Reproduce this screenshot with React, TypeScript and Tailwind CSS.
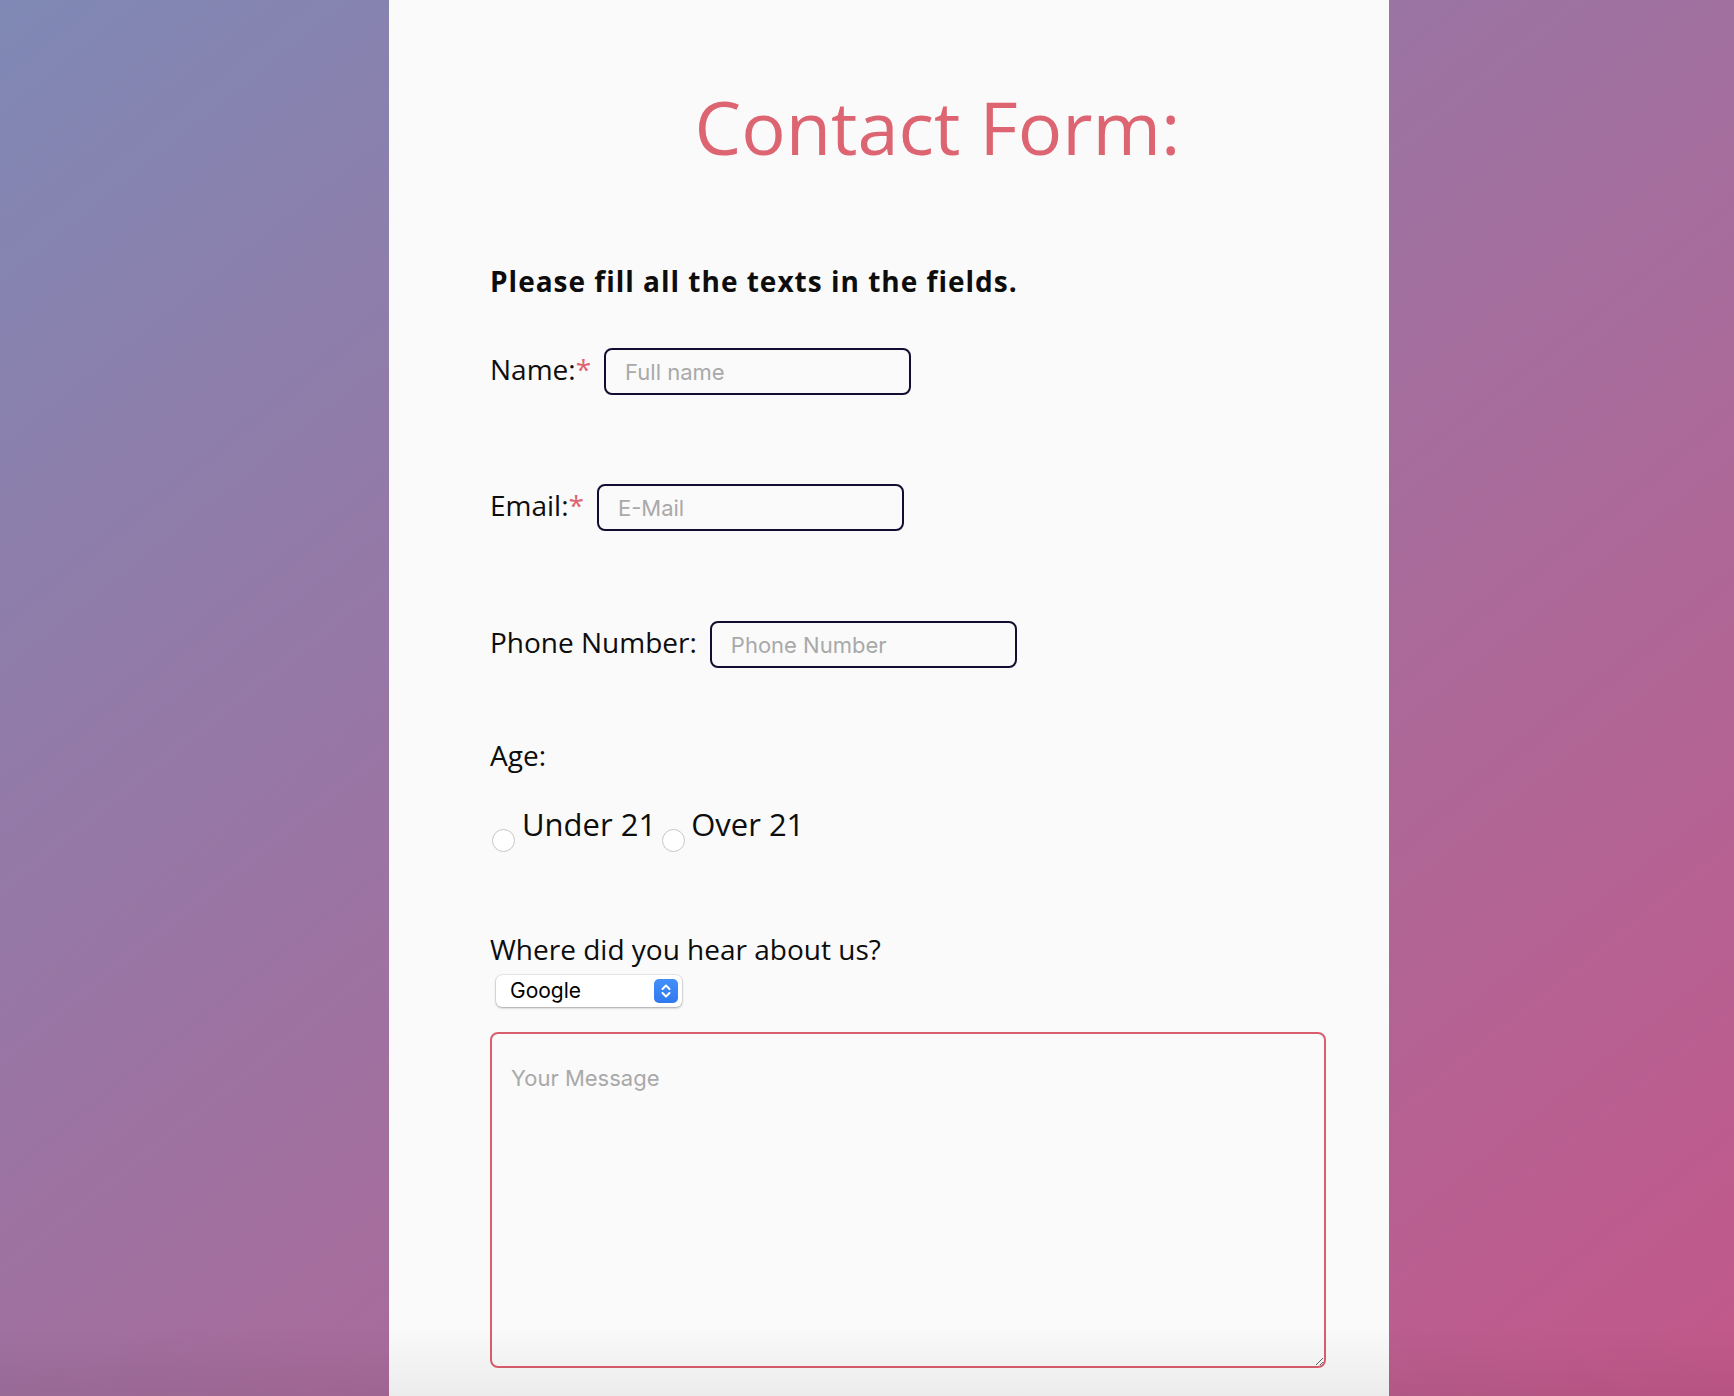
import { useState } from 'react';

function Label({ text, required }: { text: string; required?: boolean }) {
  return (
    <span className="text-[28px] leading-none text-[#0d0d0d]">
      {text}
      {required && <span className="text-[#dd6471]">*</span>}
    </span>
  );
}

function Field({ label, placeholder, required, type = 'text' }: { label: string; placeholder: string; required?: boolean; type?: string }) {
  return (
    <div className="flex items-baseline">
      <Label text={label} required={required} />
      <input
        type={type}
        placeholder={placeholder}
        className="ml-[13px] w-[307px] h-[47px] border-2 border-[#120d33] rounded-[8px] bg-transparent px-[19px] text-[22px] font-['Inter',sans-serif] text-[#111111] placeholder:text-[#a9a9a9] outline-none"
      />
    </div>
  );
}

export default function App() {
  const [age, setAge] = useState('');

  return (
    <div className="relative h-screen w-full overflow-hidden bg-[linear-gradient(to_bottom_right,#7f88b4,#c3588a)] font-['Open_Sans',sans-serif]">
      <div className="ml-[389px] w-[1000px] h-full bg-[#fafafa] pl-[101px] pr-[4px] pt-[90px]">
        {/* Title */}
        <h1 className="text-center text-[74px] leading-[74px] font-normal text-[#dd6471]">Contact Form:</h1>

        <p className="mt-[103px] text-[28px] leading-none font-bold tracking-[1px] text-[#0d0d0d]">
          Please fill all the texts in the fields.
        </p>

        <div className="mt-[53px]">
          <Field label="Name:" placeholder="Full name" required />
        </div>
        <div className="mt-[89px]">
          <Field label="Email:" placeholder="E-Mail" type="email" required />
        </div>
        <div className="mt-[90px]">
          <Field label="Phone Number:" placeholder="Phone Number" type="tel" />
        </div>

        {/* Age */}
        <div className="mt-[73px]">
          <Label text="Age:" />
        </div>
        <div className="mt-[37px] flex items-start text-[31px] leading-none text-[#0d0d0d]">
          <input
            type="radio"
            name="age"
            checked={age === 'under'}
            onChange={() => setAge('under')}
            className="appearance-none mt-[20px] ml-[2px] w-[23px] h-[23px] rounded-full border border-[#c6c6c6] bg-white shrink-0"
          />
          <span className="ml-[7px]">Under 21</span>
          <input
            type="radio"
            name="age"
            checked={age === 'over'}
            onChange={() => setAge('over')}
            className="appearance-none mt-[20px] ml-[6px] w-[23px] h-[23px] rounded-full border border-[#c6c6c6] bg-white shrink-0"
          />
          <span className="ml-[6px]">Over 21</span>
        </div>

        {/* Source */}
        <div className="mt-[83px]">
          <Label text="Where did you hear about us?" />
        </div>
        <div className="relative mt-[9px] ml-[6px] w-[186px] h-[32px]">
          <select className="appearance-none w-full h-full rounded-[6px] bg-white pl-[14px] text-[21px] text-black font-['Inter',sans-serif] shadow-[0_0_0_0.5px_rgba(0,0,0,0.12),0_1px_2.5px_rgba(0,0,0,0.3)] outline-none">
            <option>Google</option>
            <option>Facebook</option>
            <option>Friends</option>
            <option>Other</option>
          </select>
          <div className="pointer-events-none absolute right-[4px] top-[4px] w-[24px] h-[24px] rounded-[5px] bg-[linear-gradient(to_bottom,#4490f8,#2f78ef)] flex items-center justify-center">
            <svg width="12" height="16" viewBox="0 0 12 16" fill="none" stroke="white" strokeWidth="2" strokeLinecap="round" strokeLinejoin="round">
              <path d="M2.5 6 L6 2.5 L9.5 6" />
              <path d="M2.5 10 L6 13.5 L9.5 10" />
            </svg>
          </div>
        </div>

        {/* Message */}
        <textarea
          placeholder="Your Message"
          className="mt-[25px] block w-[836px] h-[336px] border-2 border-[#d95f6c] rounded-[8px] bg-transparent pl-[19px] pt-[28px] text-[22px] font-['Inter',sans-serif] text-[#111111] placeholder:text-[#a9a9a9] outline-none"
        />
      </div>

      {/* bottom window shade */}
      <div className="pointer-events-none absolute inset-x-0 bottom-0 h-[70px] bg-[linear-gradient(to_bottom,rgba(0,0,0,0),rgba(0,0,0,0.06))]" />
    </div>
  );
}
